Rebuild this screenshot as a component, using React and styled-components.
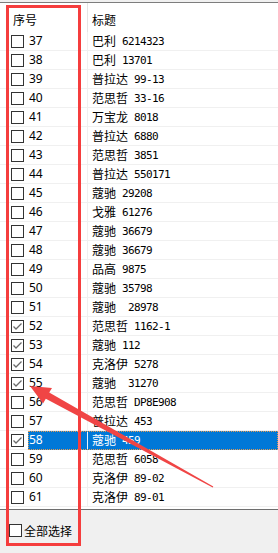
import React from "react";
import styled, { createGlobalStyle } from "styled-components";

const GlobalStyle = createGlobalStyle`
  html, body {
    margin: 0;
    padding: 0;
    background: #f0f0f0;
    overflow: hidden;
  }
  body {
    font-family: "Noto Sans", "Noto Sans CJK SC", sans-serif;
  }
`;

const Page = styled.div`
  position: relative;
  width: 278px;
  height: 553px;
  padding-top: 2px;
  box-sizing: border-box;
  display: flex;
  flex-direction: column;
  background: #f0f0f0;
  overflow: hidden;
`;

const ListView = styled.div`
  height: 508px;
  box-sizing: border-box;
  background: #ffffff;
  border-top: 1px solid #7d7d7d;
  border-bottom: 1px solid #6e6e6e;
  overflow: hidden;
  display: flex;
  flex-direction: column;
`;

const Header = styled.div`
  display: flex;
  height: 29px;
  flex: none;
`;

const HeaderCell = styled.div`
  box-sizing: border-box;
  width: ${(p) => (p.$first ? "88px" : "auto")};
  flex: ${(p) => (p.$first ? "none" : "1")};
  padding-left: ${(p) => (p.$first ? "13px" : "4px")};
  padding-top: 3px;
  border-right: ${(p) => (p.$first ? "1px solid #e5e5e5" : "none")};
  display: flex;
  align-items: center;
  font-family: "Noto Sans CJK SC", sans-serif;
  font-size: 12px;
  color: #000;
`;

const Row = styled.div`
  display: flex;
  height: 19px;
  flex: none;
`;

const CheckCell = styled.div`
  box-sizing: border-box;
  width: 28px;
  flex: none;
  padding-left: 11px;
  padding-top: 3px;
  border-bottom: 1px solid #f0f0f0;
`;

const Box = styled.div`
  box-sizing: border-box;
  width: 13px;
  height: 13px;
  border: 1px solid #333333;
  background: #ffffff;
  display: flex;
  align-items: center;
  justify-content: center;
  flex: none;
`;

const Label = styled.div`
  flex: 1;
  display: flex;
  background: ${(p) => (p.$sel ? "#0078d7" : "transparent")};
  color: ${(p) => (p.$sel ? "#ffffff" : "#000000")};
  outline: ${(p) => (p.$sel ? "1px dotted #e29a52" : "none")};
  outline-offset: -1px;
`;

const NumCell = styled.div`
  box-sizing: border-box;
  width: 60px;
  flex: none;
  padding-left: 1px;
  border-right: 1px solid ${(p) => (p.$sel ? "#e8f2fb" : "#f0f0f0")};
  border-bottom: 1px solid ${(p) => (p.$sel ? "#0078d7" : "#f0f0f0")};
  display: flex;
  align-items: center;
  font-family: "Noto Sans", sans-serif;
  font-size: 12px;
  line-height: 18px;
`;

const TitleCell = styled.div`
  flex: 1;
  box-sizing: border-box;
  padding-left: 4px;
  border-bottom: 1px solid ${(p) => (p.$sel ? "#0078d7" : "#f0f0f0")};
  display: flex;
  align-items: center;
  white-space: pre;
  line-height: 18px;
`;

const Brand = styled.span`
  font-family: "Noto Sans CJK SC", sans-serif;
  font-size: 12px;
`;

const Code = styled.span`
  font-family: "DejaVu Sans Mono", "Liberation Mono", monospace;
  font-size: 11px;
  letter-spacing: -0.62px;
  padding-top: 1px;
`;

const Footer = styled.div`
  flex: 1;
  display: flex;
  align-items: flex-start;
  padding: 14px 0 0 9px;
`;

const FooterCheck = styled.label`
  display: flex;
  align-items: center;
  gap: 2px;
  font-family: "Noto Sans CJK SC", sans-serif;
  font-size: 12px;
  color: #000;
  line-height: 13px;
`;

const RedFrame = styled.div`
  position: absolute;
  left: 6px;
  top: 5px;
  width: 75px;
  height: 541px;
  box-sizing: border-box;
  border: 3px solid #f53d3d;
  pointer-events: none;
`;

const ArrowSvg = styled.svg`
  position: absolute;
  left: 0;
  top: 0;
  pointer-events: none;
`;

const Check = () => (
  <svg width="11" height="11" viewBox="0 0 11 11">
    <polyline
      points="1.5,5.5 4,8 9.5,2.5"
      fill="none"
      stroke="#6a6a6a"
      strokeWidth="1.3"
    />
  </svg>
);

const rows = [
  [37, "巴利", " 6214323"],
  [38, "巴利", " 13701"],
  [39, "普拉达", " 99-13"],
  [40, "范思哲", " 33-16"],
  [41, "万宝龙", " 8018"],
  [42, "普拉达", " 6880"],
  [43, "范思哲", " 3851"],
  [44, "普拉达", " 550171"],
  [45, "蔻驰", " 29208"],
  [46, "戈雅", " 61276"],
  [47, "蔻驰", " 36679"],
  [48, "蔻驰", " 36679"],
  [49, "品高", " 9875"],
  [50, "蔻驰", " 35798"],
  [51, "蔻驰", "  28978"],
  [52, "范思哲", " 1162-1", true],
  [53, "蔻驰", " 112", true],
  [54, "克洛伊", " 5278", true],
  [55, "蔻驰", "  31270", true],
  [56, "范思哲", " DP8E908"],
  [57, "普拉达", " 453"],
  [58, "蔻驰", " 459", true, true],
  [59, "范思哲", " 6058"],
  [60, "克洛伊", " 89-02"],
  [61, "克洛伊", " 89-01"],
];

export default function App() {
  return (
    <>
      <GlobalStyle />
      <Page>
        <ListView>
          <Header>
            <HeaderCell $first>序号</HeaderCell>
            <HeaderCell>标题</HeaderCell>
          </Header>
          {rows.map(([n, brand, code, checked, sel]) => (
            <Row key={n}>
              <CheckCell>
                <Box>{checked ? <Check /> : null}</Box>
              </CheckCell>
              <Label $sel={sel}>
                <NumCell $sel={sel}>{n}</NumCell>
                <TitleCell $sel={sel}>
                  <Brand>{brand}</Brand>
                  <Code>{code}</Code>
                </TitleCell>
              </Label>
            </Row>
          ))}
          <Row>
            <CheckCell>
              <Box />
            </CheckCell>
          </Row>
        </ListView>
        <Footer>
          <FooterCheck>
            <Box />
            全部选择
          </FooterCheck>
        </Footer>
        <RedFrame />
        <ArrowSvg width="278" height="553" viewBox="0 0 278 553">
          <polygon
            points="30,386 52,388 49.2,392.6 213.3,486.6 212.7,487.4 45.8,398.8 43,403.6"
            fill="#f04545"
          />
        </ArrowSvg>
      </Page>
    </>
  );
}
